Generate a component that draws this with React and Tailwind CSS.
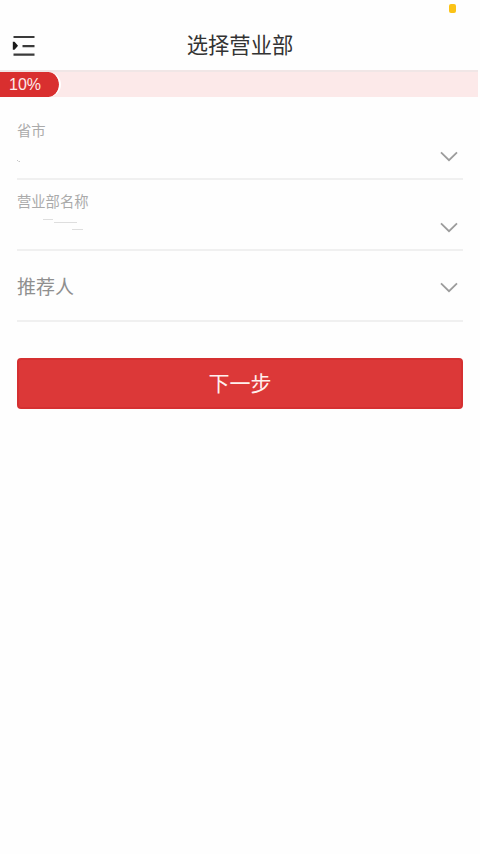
const fields = [
  { label: '省市', filled: true, smudge: 'dot' },
  { label: '营业部名称', filled: true, smudge: 'strokes' },
  { label: '推荐人', filled: false },
];

function MenuIcon() {
  return (
    <svg className="w-6 h-6" viewBox="0 0 24 24" fill="none" stroke="#3a3a3a" strokeWidth="2.2">
      <path d="M1.5 4H22.5M10.5 13.2H22.5M1.5 21.7H22.5" />
      <path d="M0.8 8.8H2.5L6 12.8L2.5 16.8H0.8Z" fill="#1a1a1a" stroke="none" />
    </svg>
  );
}

function Chevron() {
  return (
    <svg className="w-[18px] h-3" viewBox="0 0 18 12" fill="none" stroke="#9c9c9c" strokeWidth="1.8">
      <path d="M1 2.3L9 10.2L17 2.3" />
    </svg>
  );
}

// Faint leftovers of an erased value
function Smudge({ type }) {
  return (
    <svg className="w-20 h-6" viewBox="0 0 80 24" fill="none" stroke="#dedede">
      {type === 'dot' ? (
        <path d="M0 20.5H1M1.5 21.5H3" stroke="#c8c8c8" />
      ) : (
        <path d="M26 8.5H36M37 11.5H60M55 18.5H66" />
      )}
    </svg>
  );
}

function Field({ label, filled, smudge }) {
  return (
    <div className="flex h-[71px] items-center justify-between border-b-2 border-[#f0f0f0]">
      {filled ? (
        <div className="flex h-full flex-col pt-[11px]">
          <span className="text-[14.3px] leading-5 text-[#aaaaaa]">{label}</span>
          <Smudge type={smudge} />
        </div>
      ) : (
        <span className="text-[19px] leading-7 text-[#8f8f8f]">{label}</span>
      )}
      <div className={filled ? 'mr-[5px] pt-6' : 'mr-[5px] pt-[3px]'}>
        <Chevron />
      </div>
    </div>
  );
}

export default function App() {
  return (
    <div className="h-[854px] w-[480px] overflow-hidden bg-[#fefefe] font-['Noto_Sans_CJK_SC',sans-serif]">
      {/* Status bar */}
      <div className="flex h-5 justify-end pr-6 pt-1">
        <div className="h-[9px] w-[7px] rounded-[2px] bg-[#fbc316]"></div>
      </div>

      {/* Header */}
      <header className="grid h-[50px] grid-cols-[36px_1fr_36px] items-center pl-3">
        <MenuIcon />
        <h1 className="pb-[2px] pr-3 text-center text-[21.3px] leading-8 text-[#333333]">选择营业部</h1>
      </header>

      {/* Progress */}
      <div className="mr-[2px] h-[27px] border-t-2 border-[#f0e6e6] bg-[#fce9e9]">
        <div className="flex h-[25px] w-[61px] items-center rounded-r-full border-r-2 border-white bg-[#d92f2f] bg-clip-padding pl-[9px] pt-px font-['Liberation_Sans',sans-serif] text-[16px] leading-none text-[#fdeaea]">
          10%
        </div>
      </div>

      <main className="px-[17px] pt-3">
        {fields.map((field) => (
          <Field key={field.label} {...field} />
        ))}
        <button className="mt-9 flex h-[51px] w-full items-center justify-center rounded-[4px] border-2 border-[#d53031] bg-[#dc3838] pb-[3px] text-[21px] leading-8 text-[#fff0ee]">
          下一步
        </button>
      </main>
    </div>
  );
}
